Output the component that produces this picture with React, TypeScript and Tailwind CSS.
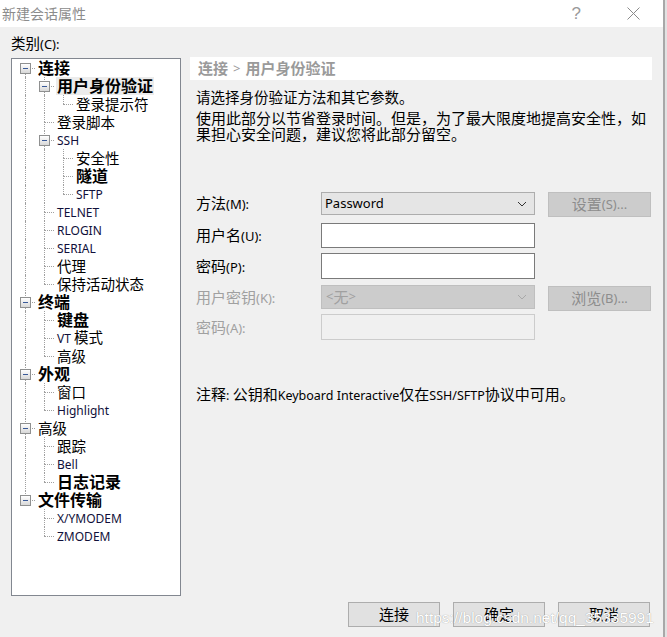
import React from 'react';

type TreeItem = { t: string; d: number; b?: boolean; sel?: boolean };

const treeItems: TreeItem[] = [
    { t: '连接', d: 0, b: true },
    { t: '用户身份验证', d: 1, b: true, sel: true },
    { t: '登录提示符', d: 2 },
    { t: '登录脚本', d: 1 },
    { t: 'SSH', d: 1 },
    { t: '安全性', d: 2 },
    { t: '隧道', d: 2, b: true },
    { t: 'SFTP', d: 2 },
    { t: 'TELNET', d: 1 },
    { t: 'RLOGIN', d: 1 },
    { t: 'SERIAL', d: 1 },
    { t: '代理', d: 1 },
    { t: '保持活动状态', d: 1 },
    { t: '终端', d: 0, b: true },
    { t: '键盘', d: 1, b: true },
    { t: 'VT 模式', d: 1 },
    { t: '高级', d: 1 },
    { t: '外观', d: 0, b: true },
    { t: '窗口', d: 1 },
    { t: 'Highlight', d: 1 },
    { t: '高级', d: 0 },
    { t: '跟踪', d: 1 },
    { t: 'Bell', d: 1 },
    { t: '日志记录', d: 1, b: true },
    { t: '文件传输', d: 0, b: true },
    { t: 'X/YMODEM', d: 1 },
    { t: 'ZMODEM', d: 1 },
];

// true when a later sibling exists at depth k (before leaving the parent)
const hasNextAt = (i: number, k: number) => {
    for (let j = i + 1; j < treeItems.length; j++) {
        if (treeItems[j].d < k) return false;
        if (treeItems[j].d === k) return true;
    }
    return false;
};

// CJK runs and latin runs get different sizes, like the Windows dialog font
const Mixed = ({ text, latin }: { text: string; latin: string }) => {
    const parts = text.split(/([\x00-\x7F]+)/).filter(Boolean);
    return (
        <>
            {parts.map((p, i) =>
                /^[\x00-\x7F]+$/.test(p) ? (
                    <span key={i} className={latin}>
                        {p}
                    </span>
                ) : (
                    <span key={i}>{p}</span>
                )
            )}
        </>
    );
};

const Chevron = ({ color }: { color: string }) => (
    <svg width="10" height="6" viewBox="0 0 10 6" fill="none">
        <path d="M1 1 L5 5 L9 1" stroke={color} strokeWidth="1" />
    </svg>
);

const Tree = () => (
    <div className="w-[170px] h-[538px] border border-[#828790] bg-white pl-[4px] shrink-0">
        {treeItems.map((item, i) => {
            const hasChildren = i + 1 < treeItems.length && treeItems[i + 1].d > item.d;
            const guides = [];
            for (let k = 0; k < item.d; k++) {
                guides.push(
                    <div key={k} className="relative w-[19px] h-[18px] shrink-0">
                        {hasNextAt(i, k) && (
                            <div className="absolute left-[9px] top-0 h-[18px] border-l border-dotted border-[#a0a0a0]" />
                        )}
                    </div>
                );
            }
            const above = i > 0;
            const below = hasNextAt(i, item.d);
            return (
                <div key={i} className="flex items-center h-[18px]">
                    {guides}
                    <div className="relative w-[19px] h-[18px] shrink-0">
                        {above && (
                            <div className="absolute left-[9px] top-0 h-[9px] border-l border-dotted border-[#a0a0a0]" />
                        )}
                        {below && (
                            <div className="absolute left-[9px] top-[9px] h-[9px] border-l border-dotted border-[#a0a0a0]" />
                        )}
                        <div className="absolute left-[9px] top-[9px] w-[10px] border-t border-dotted border-[#a0a0a0]" />
                        {hasChildren && (
                            <div className="absolute left-[4px] top-[4px] w-[11px] h-[11px] border border-[#8f9090] bg-gradient-to-b from-white to-[#d8d8d8] flex items-center justify-center">
                                <div className="w-[5px] h-px bg-[#3a5a98]" />
                            </div>
                        )}
                    </div>
                    <div
                        className={`ml-[2px] px-px leading-[18px] whitespace-nowrap text-black ${
                            item.b ? 'font-bold text-[16px]' : 'text-[14.5px]'
                        } ${item.sel ? 'bg-[#ececec]' : ''}`}
                    >
                        <Mixed text={item.t} latin="text-[12px] text-[#10103a]" />
                    </div>
                </div>
            );
        })}
    </div>
);

const Label = ({ text, disabled }: { text: string; disabled?: boolean }) => (
    <div
        className={`w-[131px] shrink-0 pl-[6px] text-[15px] leading-[18px] ${
            disabled ? 'text-[#a0a0a0]' : 'text-black'
        }`}
    >
        <Mixed text={text} latin="text-[13px]" />
    </div>
);

const SideButton = ({ text }: { text: string }) => (
    <div className="ml-[13px] w-[103px] h-[25px] bg-[#cccccc] border border-[#bfbfbf] flex items-center justify-center text-[15px] text-[#8d8d8d]">
        <Mixed text={text} latin="text-[13px]" />
    </div>
);

const DialogButton = ({ text }: { text: string }) => (
    <div className="w-[92px] h-[25px] bg-[#e1e1e1] border border-[#adadad] flex items-center justify-center text-[15px] text-black">
        {text}
    </div>
);

export default function App() {
    return (
        <div className="w-[667px] h-[637px] flex bg-[#f0f0f0] font-['Noto_Sans','Noto_Sans_CJK_SC',sans-serif] relative overflow-hidden">
            <div className="w-[663px] flex flex-col shrink-0">
                {/* Title bar */}
                <div className="h-[27px] bg-white flex items-center pl-[2px]">
                    <span className="text-[14px] text-[#8c8c8c]">新建会话属性</span>
                    <span className="ml-auto text-[17px] text-[#9a9a9a] font-['Liberation_Sans',sans-serif] mr-[46px]">?</span>
                    <svg width="13" height="13" viewBox="0 0 13 13" className="mr-[23px]">
                        <path d="M0.5 0.5 L12.5 12.5 M12.5 0.5 L0.5 12.5" stroke="#8a8a8a" strokeWidth="1" />
                    </svg>
                </div>

                <div className="h-[31px] pl-[11px] pt-[8px] text-[14.5px] leading-[16px] text-black">
                    <Mixed text="类别(C):" latin="text-[13px]" />
                </div>

                <div className="flex pl-[11px]">
                    <Tree />

                    {/* Right pane */}
                    <div className="ml-[9px] -mt-px w-[462px] flex flex-col">
                        <div className="h-[23px] bg-white pl-[8px] flex items-center text-[15px] font-bold text-[#9a9a9a]">
                            连接 <span className="mx-[5px] font-normal text-[13px]">&gt;</span> 用户身份验证
                        </div>
                        <div className="mt-[9px] pl-[6px] text-[14.5px] leading-[16px] text-black">
                            请选择身份验证方法和其它参数。
                        </div>
                        <div className="mt-[5px] pl-[6px] text-[15px] leading-[16px] text-black whitespace-nowrap">
                            使用此部分以节省登录时间。但是，为了最大限度地提高安全性，如
                            <br />
                            果担心安全问题，建议您将此部分留空。
                        </div>

                        {/* Form */}
                        <div className="mt-[50px] flex items-start">
                            <div className="h-[23px] flex items-center">
                                <Label text="方法(M):" />
                            </div>
                            <div className="w-[214px] h-[23px] bg-[#e5e5e5] border border-[#adadad] flex items-center pl-[3px] pr-[7px]">
                                <span className="text-[13px] text-black">Password</span>
                                <span className="ml-auto">
                                    <Chevron color="#333" />
                                </span>
                            </div>
                            <SideButton text="设置(S)..." />
                        </div>

                        <div className="mt-[6px] flex items-center">
                            <Label text="用户名(U):" />
                            <div className="w-[214px] h-[25px] bg-white border border-[#7a7a7a]" />
                        </div>

                        <div className="mt-[5px] flex items-center">
                            <Label text="密码(P):" />
                            <div className="w-[214px] h-[26px] bg-white border border-[#7a7a7a]" />
                        </div>

                        <div className="mt-[6px] flex items-start">
                            <div className="h-[24px] flex items-center">
                                <Label text="用户密钥(K):" disabled />
                            </div>
                            <div className="w-[214px] h-[24px] bg-[#cccccc] border border-[#bfbfbf] flex items-center pl-[4px] pr-[7px] text-[15px] text-[#a0a0a0]">
                                <Mixed text="<无>" latin="text-[13px]" />
                                <span className="ml-auto">
                                    <Chevron color="#a8a8a8" />
                                </span>
                            </div>
                            <div className="mt-px">
                                <SideButton text="浏览(B)..." />
                            </div>
                        </div>

                        <div className="mt-[3px] flex items-center">
                            <Label text="密码(A):" disabled />
                            <div className="w-[214px] h-[26px] bg-[#f0f0f0] border border-[#cccccc]" />
                        </div>

                        <div className="mt-[46px] pl-[6px] text-[15px] leading-[16px] text-black whitespace-nowrap">
                            <Mixed text="注释: 公钥和Keyboard Interactive仅在SSH/SFTP协议中可用。" latin="text-[12.5px]" />
                        </div>
                    </div>
                </div>

                {/* Dialog buttons */}
                <div className="mt-[6px] flex justify-end gap-[13px] pr-[13px]">
                    <DialogButton text="连接" />
                    <DialogButton text="确定" />
                    <DialogButton text="取消" />
                </div>
            </div>
            <div className="w-[2px] bg-[#a8a8a8] shrink-0" />
            <div className="w-[2px] bg-[#e2e2e2] shrink-0" />

            {/* Watermark */}
            <div className="absolute left-[416px] top-[606px] text-[15.5px] font-['Liberation_Sans',sans-serif] text-white [text-shadow:0_0_1px_#8a8a8a] pointer-events-none">
                https://blog.csdn.net/qq_35335991
            </div>
        </div>
    );
}
